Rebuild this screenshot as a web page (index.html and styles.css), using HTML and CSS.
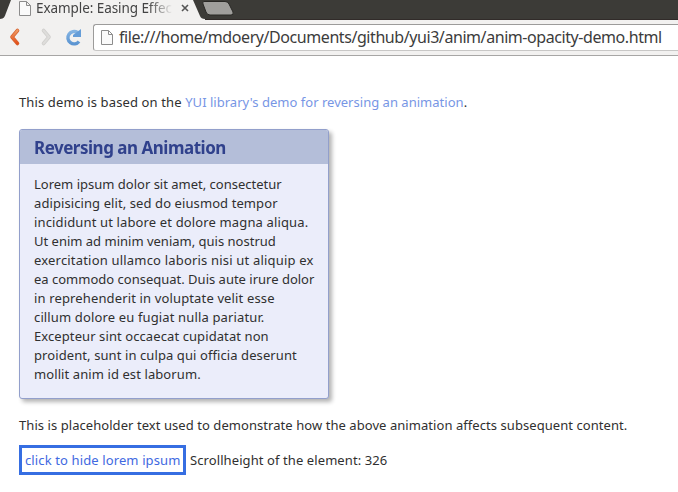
FILE: index.html
```html
<!DOCTYPE html>
<html lang="en">
<head>
<meta charset="utf-8">
<title>Example: Easing Effects</title>
<link rel="stylesheet" href="styles.css">
</head>
<body>
<header class="browser">
  <div class="tabs">
    <svg class="tab-shapes" width="240" height="20" viewBox="0 0 240 20">
      <path d="M0 20V19C4 19 5 16 6 13L11 0H193L200 16Q201 19 205 19V20Z" fill="#f2f1f0"/>
      <path d="M204 1.500H225Q228 1.500 229 4L233 12Q234 15 231 15H210Q207 15 206 12L203 4Q202 1.500 204 1.500Z" fill="#a09f9c" stroke="#292825"/>
    </svg>
    <div class="tab">
      <svg class="page-icon" width="12" height="15" viewBox="0 0 12 15"><path d="M.5.5H7.500L11.500 4.500V14.500H.5ZM7.500.5V4.500H11.500" fill="#fafafa" stroke="#8c8c8c"/></svg>
      <span class="tab-title">Example: Easing Effec</span>
      <svg class="close" width="8" height="8" viewBox="0 0 8 8"><path d="M1 1L7 7M7 1L1 7" stroke="#555" stroke-width="1.600"/></svg>
    </div>
  </div>
  <div class="toolbar">
    <svg class="nav" width="80" height="24" viewBox="0 0 80 24">
      <defs>
        <linearGradient id="o" x2="0" y2="1"><stop stop-color="#ef9a62"/><stop offset="1" stop-color="#e4501b"/></linearGradient>
        <linearGradient id="b" x2="0" y2="1"><stop stop-color="#83b3e2"/><stop offset="1" stop-color="#5c95d2"/></linearGradient>
      </defs>
      <path d="M17.500 5.500L12 12L17.500 18.500" fill="none" stroke="#d5622f" stroke-width="3.600" stroke-linecap="round" stroke-linejoin="round"/>
      <path d="M17.500 5.500L12 12L17.500 18.500" fill="none" stroke="url(#o)" stroke-width="2.200" stroke-linecap="round" stroke-linejoin="round"/>
      <path d="M43.500 5.500L49 12L43.500 18.500" fill="none" stroke="#d0cfcd" stroke-width="3.600" stroke-linecap="round" stroke-linejoin="round"/>
      <path d="M43.500 5.500L49 12L43.500 18.500" fill="none" stroke="#dedddb" stroke-width="2" stroke-linecap="round" stroke-linejoin="round"/>
      <path d="M77.500 7.500A6.200 6.200 0 1 0 79 16.500" fill="none" stroke="url(#b)" stroke-width="3.400"/>
      <path d="M81 4V12H73V10Z" fill="#659dd8"/>
    </svg>
    <div class="address">
      <svg class="page-icon" width="12" height="15" viewBox="0 0 12 15"><path d="M.5.5H7.500L11.500 4.500V14.500H.5ZM7.500.5V4.500H11.500" fill="#fafafa" stroke="#8c8c8c"/></svg>
      <span class="url">file:///home/mdoery/Documents/github/yui3/anim/anim-opacity-demo.html</span>
    </div>
  </div>
</header>
<main>
  <p class="intro">This demo is based on the <a>YUI library's demo for reversing an animation</a>.</p>
  <section class="module">
    <h3><span>Reversing an Animation</span></h3>
    <p class="lorem"><span>Lorem ipsum dolor sit amet, consectetur</span><br><span class="loose">adipisicing elit, sed do eiusmod tempor</span><br><span class="looser">incididunt ut labore et dolore magna aliqua.</span><br>Ut enim ad minim veniam, quis nostrud<br><span class="loosest">exercitation ullamco laboris nisi ut aliquip ex</span><br>ea commodo consequat. Duis aute irure dolor<br><span class="looser">in reprehenderit in voluptate velit esse</span><br><span class="looser">cillum dolore eu fugiat nulla pariatur.</span><br><span class="loose">Excepteur sint occaecat cupidatat non</span><br><span class="loose">proident, sunt in culpa qui officia deserunt</span><br><span class="loose">mollit anim id est laborum.</span></p>
  </section>
  <p class="after">This is placeholder text used to demonstrate how the above animation affects subsequent content.</p>
  <div class="controls"><button><span class="label">click to hide lorem ipsum</span></button><span class="status">Scrollheight of the element: 326</span></div>
</main>
</body>
</html>
```
FILE: styles.css
```css
* { box-sizing: border-box; }
body { margin: 0; height: 492px; overflow: hidden; background: #fff; color: #303030; font: 13px/19px "Noto Sans", sans-serif; }
p, h3 { margin: 0; white-space: nowrap; }
.browser { height: 56px; background: #f2f1f0; border-bottom: 1px solid #a7a6a5; }
.tabs { position: relative; height: 20px; background: #3c3b37; border-bottom: 1px solid #312b29; }
.tab-shapes { position: absolute; left: 0; top: 0; }
.tab { position: relative; display: flex; height: 19px; padding-left: 19px; }
.tab .page-icon { flex: none; margin-top: 1px; }
.tab-title { width: 137px; margin-left: 5px; overflow: hidden; white-space: nowrap; font-size: 13.5px; line-height: 16px; letter-spacing: -.07px; color: #444; -webkit-mask-image: linear-gradient(90deg, #000 82%, transparent); }
.close { margin: 4px 0 0 8px; }
.toolbar { display: flex; height: 35px; padding-top: 4px; }
.nav { flex: none; width: 80px; margin-top: 1px; overflow: visible; }
.address { display: flex; flex: 1; height: 27px; margin-left: 13px; padding: 5px 0 0 7px; background: #fff; border: 1px solid #9c9b9a; border-bottom-color: #c8c7c6; border-right: 0; border-radius: 3px 0 0 3px; }
.address .page-icon { flex: none; }
.url { margin-left: 6px; font-size: 16px; line-height: 15px; letter-spacing: -.43px; white-space: nowrap; color: #3c3c3c; }
main { padding: 37px 19px 0; }
.intro { letter-spacing: .13px; }
a { color: #7796e5; letter-spacing: .02px; }
.module { width: 310px; height: 270px; margin-top: 17px; background: #ebedfa; border: 1px solid #929fcb; border-radius: 3px; box-shadow: 3px 3px 4px rgba(0,0,0,.3); overflow: hidden; }
h3 { height: 34px; padding-left: 14px; background: #b4bed9; color: #30418c; font: bold 18px/35px "Noto Sans", sans-serif; letter-spacing: -.5px; }
h3 span { display: inline-block; transform: scaleX(.942); transform-origin: left; }
.lorem { padding: 11px 0 0 14px; }
.loose { letter-spacing: .09px; }
.looser { letter-spacing: .14px; }
.loosest { letter-spacing: .19px; }
.after { margin-top: 17px; letter-spacing: .06px; }
.controls { display: flex; align-items: center; height: 30px; margin-top: 10px; gap: 4px; white-space: nowrap; }
button { width: 167px; height: 30px; padding: 0 3px; border: 3px solid #366ee2; background: #fff; color: #4169e1; font: inherit; letter-spacing: .12px; text-align: left; }
.status { letter-spacing: .09px; }
```
